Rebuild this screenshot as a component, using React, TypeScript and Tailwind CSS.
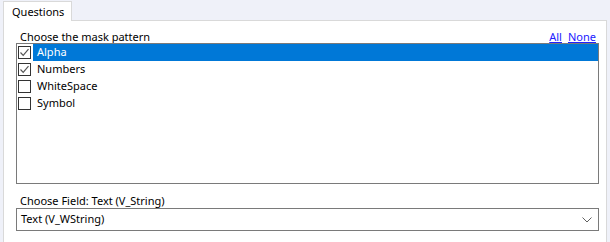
const items = [
  { label: "Alpha", checked: true, selected: true },
  { label: "Numbers", checked: true, selected: false },
  { label: "WhiteSpace", checked: false, selected: false },
  { label: "Symbol", checked: false, selected: false },
];

function Check({ checked }: { checked: boolean }) {
  return (
    <span className="flex h-[13px] w-[13px] shrink-0 items-center justify-center border border-[#333333] bg-white">
      {checked && (
        <svg width="11" height="11" viewBox="0 0 11 11" fill="none">
          <path d="M1.5 5.5 L4.2 8.3 L9.5 2.2" stroke="#555555" strokeWidth="1.2" />
        </svg>
      )}
    </span>
  );
}

export default function App() {
  return (
    <div
      className="flex h-[242px] w-[610px] flex-col bg-[#eff1f9] px-[3px] pt-[1px] text-[11px] text-black"
      style={{ fontFamily: '"Noto Sans", "Open Sans", sans-serif' }}
    >
      <div className="relative z-10 -mb-px flex h-[20px] w-[69px] items-center border border-b-0 border-[#d9d9d9] bg-white pl-[8px] leading-none">
        Questions
      </div>

      <div className="flex flex-1 flex-col border border-b-0 border-[#d9d9d9] bg-white pl-[12px] pr-[7px] pt-[8px]">
        <div className="flex h-[14px] items-center justify-between pl-[4px] pr-[3px] leading-none">
          <span>Choose the mask pattern</span>
          <span className="flex gap-[6px] text-[#2020ff]">
            <a className="underline" href="#">All</a>
            <a className="underline" href="#">None</a>
          </span>
        </div>

        <div className="h-[141px] border border-[#7a7a7a] bg-white">
          {items.map((it) => (
            <div key={it.label} className="flex h-[17px] items-center">
              <div className="ml-[1px] flex">
                <Check checked={it.checked} />
              </div>
              <div
                className={
                  it.selected
                    ? "ml-[2px] flex h-full flex-1 items-center bg-[#0078d7] pl-[4px] text-white"
                    : "ml-[2px] flex h-full flex-1 items-center pl-[4px]"
                }
              >
                {it.label}
              </div>
            </div>
          ))}
        </div>

        <div className="mt-[9px] flex h-[14px] items-center pl-[4px] leading-none">
          Choose Field: Text (V_String)
        </div>

        <div className="mt-[1px] flex h-[23px] items-center justify-between border border-[#7a7a7a] bg-white pl-[4px] pr-[6px]">
          <span>Text (V_WString)</span>
          <svg width="10" height="6" viewBox="0 0 10 6" fill="none">
            <path d="M0.5 0.5 L5 5 L9.5 0.5" stroke="#606060" strokeWidth="1" />
          </svg>
        </div>
      </div>
    </div>
  );
}
